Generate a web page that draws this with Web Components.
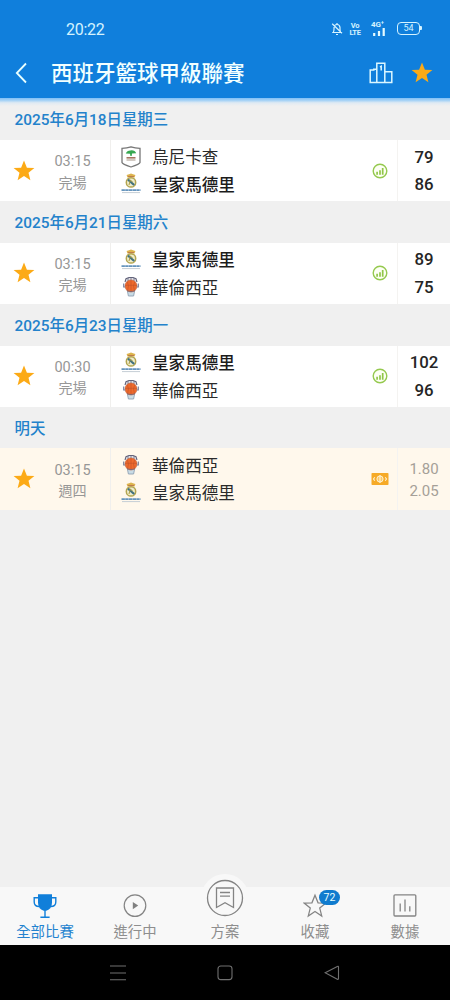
<!DOCTYPE html>
<html lang="zh-Hant">
<head>
<meta charset="utf-8">
<title>西班牙籃球甲級聯賽</title>
<style>
body{margin:0;width:450px;height:1000px;overflow:hidden;background:#f0f0f0;font-family:Roboto,"Noto Sans CJK TC",sans-serif}
</style>
</head>
<body>
<league-app></league-app>
<script>
const STAR = '<path d="M0-10.6 2.9-3.3 10.4-3.1 4.5 1.7 6.4 9.2 0 4.9-6.4 9.2-4.5 1.7-10.4-3.1-2.9-3.3Z"';
const ICONS = {
  star: ['-11 -11 22 22', 22, 22, STAR + ' fill="#fcaa16"/>'],
  chart: ['0 0 16 16', 16, 16, '<circle cx="8" cy="8" r="6.8" fill="#fdfff4" stroke="#95c94f" stroke-width="1.4"/><path d="M5.1 8.8v3M8 7.2v4.6M10.7 5v6.8" stroke="#90c648" stroke-width="1.7"/>'],
  cash: ['0 0 18 14', 18, 14, '<rect x=".5" y="1" width="17" height="12" rx=".8" fill="#f6aa27"/><circle cx="9" cy="7" r="3.1" fill="#fbc765" stroke="#fff3d5"/><path d="M9 3v8M3.8 5.2 2.5 7l1.3 1.8M14.2 5.2 15.5 7l-1.3 1.8" fill="none" stroke="#fff3d5" stroke-width="1.1"/>'],
  unicaja: ['0 0 20 22', 20, 22, '<path d="M1 2.3 Q6 2.3 10 .9 Q14 2.3 19 2.3V16.5Q18.6 18.3 10 21 1.4 18.3 1 16.5Z" fill="#fff" stroke="#777" stroke-width="1.3"/><path d="M4.8 7.6Q6 4.3 9.5 4.4 14 3.9 15.2 7.3L11 7.6 10.7 10H9.4L9 7.8Z" fill="#36a851"/><path d="M5.5 11.8h9" stroke="#a4755f" stroke-width="1.6"/><path d="M5.5 14h9" stroke="#b5a79b" stroke-width="1.2"/>'],
  madrid: ['0 0 20 22', 20, 22, '<path d="M6.4 4.4 5.6 1.9 8 1.2 10 .5 12 1.2 14.4 1.9 13.6 4.4Z" fill="#dcb34d"/><path d="M7 3.6h6" stroke="#b4664a" stroke-width=".8"/><circle cx="10" cy="9.4" r="4.7" fill="#efeccb" stroke="#b3a550" stroke-width="1.5"/><path d="M7 6.7 13.2 12" stroke="#3f7180" stroke-width="2.2"/><path d="M8 12 9.3 7 11.8 9.2" fill="none" stroke="#a99b45"/><path d="M.5 17.2h19" stroke="#6594bd" stroke-width="1.7" stroke-dasharray="3.4 .3"/><path d="M1 19.6h18" stroke="#c5ced5" stroke-width="1"/>'],
  valencia: ['0 0 20 22', 20, 22, '<path d="M4 6 5 2.7 8 1.5h4l3 1.2L16 6" fill="#e0e0e6" stroke="#62627a" stroke-width="1.1"/><path d="M7 2v3M10 1.7v3M13 2v3" stroke="#6d7084" stroke-width=".8"/><path d="M6.2 14h7.6L12.6 20H7.4Z" fill="#c9dce6" stroke="#8fa0b3" stroke-width=".9"/><circle cx="10" cy="10" r="6" fill="#ee6a2c" stroke="#c25c34" stroke-width=".6"/><path d="M4 9.3h12M10 4.6v10.6M6.3 5.8Q8.6 10 6.6 14.2M13.7 5.8Q11.4 10 13.4 14.2" fill="none" stroke="#b84f2b" stroke-width=".5"/><path d="M2.7 7.6v3.4h1.6M17.3 7.6v3.4h-1.6" fill="none" stroke="#7a809a" stroke-width="1.2"/><path d="M6.2 14.8Q10 16.4 13.8 14.8" fill="none" stroke="#7b6877" stroke-width=".9"/>'],
  back: ['0 0 14 22', 14, 22, '<path d="M12 1.5 2.8 11l9.2 9.5" fill="none" stroke="#e8ffff" stroke-width="1.8"/>'],
  podium: ['0 0 24 22', 24, 22, '<path d="M7.8 20.5V1.3h8v19.2M7.8 7.2h-3v.7H1.2v12.6h21.6V9.8h-7M11 5l1.2-.7V8.5" fill="none" stroke="#dcf7ff" stroke-width="1.5"/>'],
  bell: ['0 0 12 14', 12, 14, '<path d="M6 1v1M2.2 10.5Q3 9.5 3 7V5.5Q3.3 2.5 6 2.5T9 5.5V7q0 2.5.8 3.5H1.2M5 12.5h2M1.2 1.8l9.8 9.5" fill="none" stroke="#d7f4ff" stroke-width="1.2"/>'],
  signal: ['0 0 12 8', 12, 8, '<path d="M1.2 5v3M6 3v5M10.7 0v8" stroke="#e4faff" stroke-width="2.2"/>'],
  trophy: ['0 0 24 26', 24, 26, '<path d="M5 1.2h14v8.3q0 6.5-5.7 8.2H10.7Q5 16 5 9.5Z" fill="#107fda"/><path d="M5 4.8H1.2V9q0 4.5 5 4.5M19 4.8h3.8V9q0 4.5-5 4.5M12 17v7M7.4 24.2h9.2" fill="none" stroke="#107fda" stroke-width="1.4"/>'],
  play: ['0 0 24 26', 24, 26, '<circle cx="12" cy="12.6" r="10.8" fill="none" stroke="#848484" stroke-width="1.2"/><path d="M9.8 8.9 15.2 12.6 9.8 16.3Z" fill="#808080"/>'],
  plan: ['0 0 48 48', 48, 48, '<circle cx="24" cy="24" r="24" fill="#f8f8f8"/><circle cx="24" cy="24" r="17.5" fill="none" stroke="#848484" stroke-width="1.3"/><path d="M15.5 14h17v19.5L24 28.8l-8.5 4.7ZM19 18.5h10M19 22.2h10" fill="none" stroke="#848484" stroke-width="1.3"/>'],
  fav: ['-12 -13 24 26', 24, 26, '<g transform="translate(0 .3) scale(1.05)">' + STAR + ' fill="none" stroke="#848484" stroke-width="1.2"/></g>'],
  data: ['0 0 24 26', 24, 26, '<rect x="1" y="1.8" width="21.8" height="21.2" rx="1" fill="none" stroke="#848484" stroke-width="1.3"/><path d="M7.2 10.5v8M12 6.5v12M16.8 13.2v5.3" stroke="#848484" stroke-width="1.3"/>'],
  menu: ['0 0 16 18', 16, 18, '<path d="M0 2h16M0 9h16M0 15.8h16" stroke="#707070" stroke-width="1.1"/>'],
  home: ['0 0 16 18', 16, 18, '<rect x="1" y="2" width="14" height="13.6" rx="2.8" fill="none" stroke="#707070" stroke-width="1.1"/>'],
  prev: ['0 0 16 18', 16, 18, '<path d="M1.2 8.8 13.3 2.4q1.2-.5 1.2.7v11.4q0 1.2-1.2.7Z" fill="none" stroke="#707070" stroke-width="1.1"/>']
};
function define(name, css, html) {
  customElements.define(name, class extends HTMLElement {
    connectedCallback() {
      if (this.shadowRoot) return;
      this.attachShadow({mode: 'open'}).innerHTML = '<style>*{box-sizing:border-box}' + css + '</style>' + (typeof html === 'function' ? html(this) : html);
    }
  });
}
define('ui-icon', ':host{display:inline-flex;flex:none}svg{display:block}', el => {
  const [box, w, h, body] = ICONS[el.getAttribute('name')];
  return `<svg viewBox="${box}" width="${w}" height="${h}">${body}</svg>`;
});
define('status-bar', `:host{display:flex;height:47px;box-sizing:border-box;padding:10px 30px 0 66px;align-items:center;color:#d5f3ff}
.time{font-size:16px;flex:1;line-height:20px;padding-top:2px;letter-spacing:-.3px}
.lte{font:bold 7.5px/7px Roboto,sans-serif;margin:0 10px 0 6px;text-align:center;width:12px;letter-spacing:-.3px}
.net{font:bold 8px/7px Roboto,sans-serif;width:16px;margin-right:10px;white-space:nowrap;letter-spacing:-.2px}
.net ui-icon{display:flex;margin-left:2px}
.bat{position:relative;width:23px;height:12.5px;border:1.4px solid #d5f3ff;border-radius:4px;font:9px/10px Roboto,sans-serif;text-align:center}
.bat:after{content:"";position:absolute;right:-3px;top:3px;width:2px;height:4px;background:#d5f3ff;border-radius:0 1px 1px 0}`,
`<span class="time">20:22</span><ui-icon name="bell"></ui-icon><div class="lte">Vo<br>LTE</div><div class="net">4G⁺<ui-icon name="signal"></ui-icon></div><div class="bat">54</div>`);
define('title-bar', `:host{display:flex;height:51px;align-items:center;box-sizing:border-box;padding:0 17px 0 14px;color:#f2ffff}
h1{font-size:21.5px;font-weight:500;line-height:30px;margin:0 0 0 23px;flex:1;white-space:nowrap;padding-top:2px}
ui-icon[name=star]{margin-left:18px}`,
`<ui-icon name="back"></ui-icon><h1><slot></slot></h1><ui-icon name="podium"></ui-icon><ui-icon name="star"></ui-icon>`);
define('day-header', `:host{display:flex;align-items:center;box-sizing:border-box;height:41.4px;padding:2px 14.5px 0;color:#2382cb;font-size:15.4px;font-weight:500;line-height:24px;background:#f0f0f0}`, `<slot></slot>`);
define('team-name', `:host{display:flex;align-items:center;height:27.5px;font-size:16.6px;line-height:24px;color:#2a2a2a}:host([bold]){font-weight:500;color:#1c1c1c}
ui-icon{margin-right:11px}span{padding-top:3px}`, el => `<ui-icon name="${el.getAttribute('crest')}"></ui-icon><span><slot></slot></span>`);
define('match-row', `:host{display:grid;grid-template-columns:35px 75px 1fr 34px 53px;height:61.4px;background:#fff}
:host([upcoming]){background:#fff8ec}
.star,.mark{display:flex;align-items:center;justify-content:flex-end}
.mark{justify-content:center}
.when{display:flex;flex-direction:column;align-items:center;justify-content:center;font-size:14.5px;line-height:20.5px;color:#979797;padding-top:4px}
.when span:last-child{font-size:14.1px}
.teams{border-left:1px solid #f0efed;padding:3.2px 0 0 10px}
.score{border-left:1px solid #f4f3f1;display:flex;flex-direction:column;align-items:center;justify-content:center;color:#252525;font-size:16.8px;font-weight:500;line-height:27.5px;padding-top:1px}
:host([upcoming]) .score{font-size:15px;font-weight:400;line-height:22px;color:#a5a098}`,
el => { const a = n => el.getAttribute(n), s = a('score').split('|');
return `<div class="star"><ui-icon name="star"></ui-icon></div><div class="when"><span>${a('time')}</span><span>${a('state')}</span></div><div class="teams"><slot></slot></div><div class="mark"><ui-icon name="${el.hasAttribute('upcoming') ? 'cash' : 'chart'}"></ui-icon></div><div class="score"><span>${s[0]}</span><span>${s[1]}</span></div>`; });
define('nav-item', `:host{display:flex;flex-direction:column;align-items:center;justify-content:flex-end;height:58px;box-sizing:border-box;color:#8e8e8e;font-size:14.4px;line-height:20px;padding-bottom:2.5px}
:host([active]){color:#2382cf}
.pic{position:relative;height:26px;display:flex;align-items:center;margin-bottom:4px}
:host([raised]) .pic{margin-bottom:11.5px}
.badge{position:absolute;left:16px;top:-2.5px;width:21px;height:15px;border-radius:8px;background:#107bce;color:#eaffff;font-size:10.5px;line-height:15px;text-align:center}`,
el => `<div class="pic"><ui-icon name="${el.getAttribute('icon')}"></ui-icon>${el.hasAttribute('badge') ? `<span class="badge">${el.getAttribute('badge')}</span>` : ''}</div><span><slot></slot></span>`);
define('bottom-nav', `:host{display:grid;grid-template-columns:repeat(5,1fr);height:58px;background:#f8f8f8}`, `<slot></slot>`);
define('system-nav', `:host{display:flex;height:55px;background:#000;align-items:center;justify-content:space-between;box-sizing:border-box;padding:0 110px 0 109.5px}`, `<ui-icon name="menu"></ui-icon><ui-icon name="home"></ui-icon><ui-icon name="prev"></ui-icon>`);
define('league-app', `:host{display:flex;flex-direction:column;width:450px;height:1000px;background:#f0f0f0}
header{height:98px;background:#107fdc}
.shade{height:8px;margin-bottom:-8px;z-index:1;background:linear-gradient(#80bff5,#a5d2f6 30%,#dfeaf3 60%,#f0f0f0)}
main{flex:1}`,
`<header><status-bar></status-bar><title-bar>西班牙籃球甲級聯賽</title-bar></header><div class="shade"></div>
<main>
<day-header style="height:42px">2025年6月18日星期三</day-header>
<match-row time="03:15" state="完場" score="79|86"><team-name crest="unicaja">烏尼卡查</team-name><team-name crest="madrid" bold>皇家馬德里</team-name></match-row>
<day-header>2025年6月21日星期六</day-header>
<match-row time="03:15" state="完場" score="89|75"><team-name crest="madrid" bold>皇家馬德里</team-name><team-name crest="valencia">華倫西亞</team-name></match-row>
<day-header>2025年6月23日星期一</day-header>
<match-row time="00:30" state="完場" score="102|96"><team-name crest="madrid" bold>皇家馬德里</team-name><team-name crest="valencia">華倫西亞</team-name></match-row>
<day-header>明天</day-header>
<match-row upcoming time="03:15" state="週四" score="1.80|2.05"><team-name crest="valencia">華倫西亞</team-name><team-name crest="madrid">皇家馬德里</team-name></match-row>
</main>
<bottom-nav><nav-item icon="trophy" active>全部比賽</nav-item><nav-item icon="play">進行中</nav-item><nav-item icon="plan" raised>方案</nav-item><nav-item icon="fav" badge="72">收藏</nav-item><nav-item icon="data">數據</nav-item></bottom-nav>
<system-nav></system-nav>`);
</script>
</body>
</html>
